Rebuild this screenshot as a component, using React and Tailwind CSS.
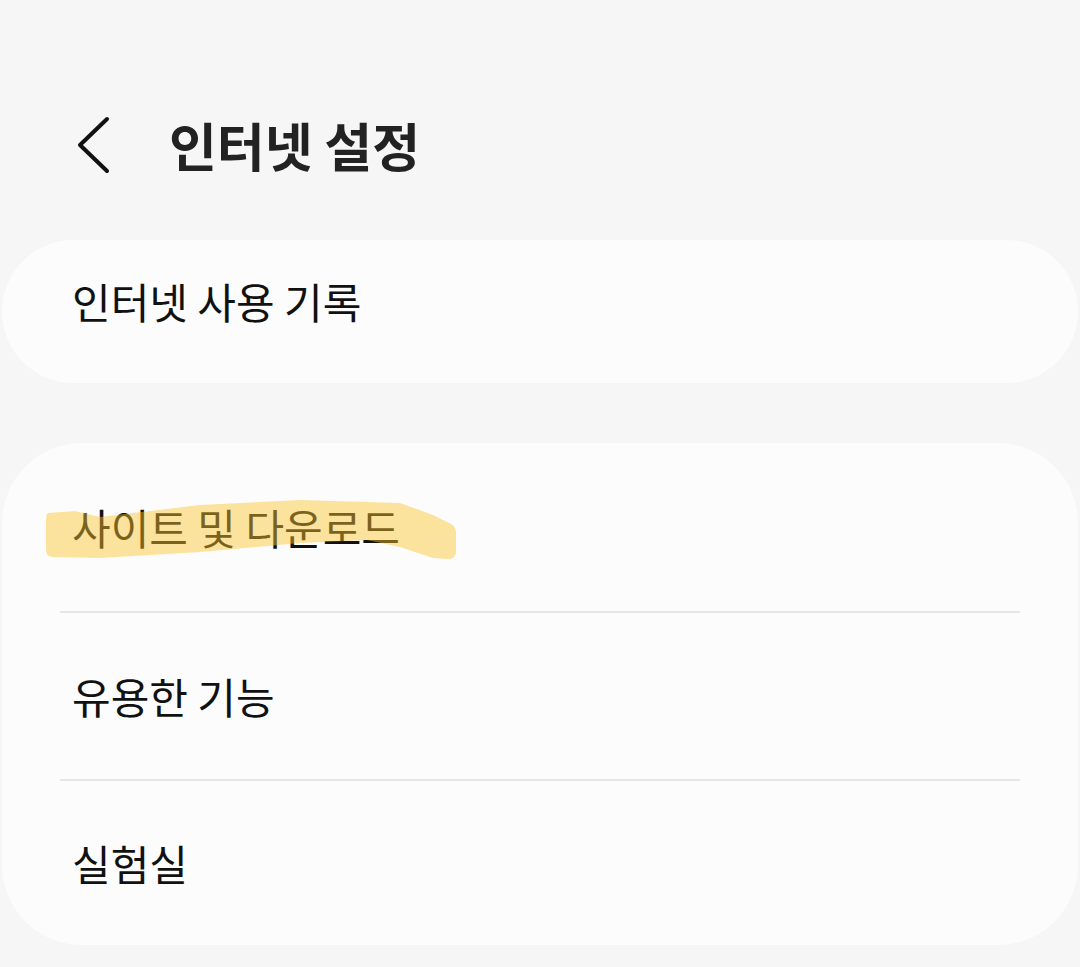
const rows = ["사이트 및 다운로드", "유용한 기능", "실험실"];

const Highlight = () => (
  <svg
    className="pointer-events-none absolute left-[38px] top-[52px]"
    width="425"
    height="70"
    viewBox="0 0 425 70"
  >
    <path
      d="M8 18 L35 16 L60 22 L160 10 L260 5 L360 8 L393 20 L411 29 Q417 33 416 40 L416 58 Q415 64 408 64 L393 63 L360 52 L327 45 L260 48 L160 57 L60 63 L12 62 Q6 61 6 55 L6 25 Q6 19 8 18 Z"
      fill="#fcc52a"
      fillOpacity="0.45"
    />
  </svg>
);

const App = () => {
  return (
    <div className="min-h-screen bg-[#f6f6f6] font-['Noto_Sans_CJK_KR','Noto_Sans',sans-serif] text-[#111]">
      <header className="flex h-[240px] items-center pt-[50px] pl-[76px]">
        <svg width="36" height="58" viewBox="0 0 36 58" className="shrink-0">
          <path
            d="M31 3 L4 29 L31 55"
            fill="none"
            stroke="#111"
            strokeWidth="4"
            strokeLinecap="round"
            strokeLinejoin="round"
          />
        </svg>
        <h1 className="ml-[57px] text-[52px] font-bold leading-none text-[#222]">
          인터넷 설정
        </h1>
      </header>

      <div className="mx-[2px] flex h-[143px] items-center rounded-[72px] bg-[#fcfcfc] pb-[22px] pl-[70px]">
        <span className="text-[42px] leading-none">인터넷 사용 기록</span>
      </div>

      <div className="mx-[2px] mt-[60px] rounded-[80px] bg-[#fcfcfc]">
        {rows.map((label, i) => (
          <div key={label}>
            {i > 0 && <div className="mx-[58px] h-[2px] bg-[#e6e6e6]" />}
            <div
              className={`relative flex items-center pl-[70px] ${
                i === 0 ? "h-[168px]" : i === 1 ? "h-[166px]" : "h-[164px]"
              }`}
            >
              <span className="text-[42px] leading-none">{label}</span>
              {i === 0 && <Highlight />}
            </div>
          </div>
        ))}
      </div>
    </div>
  );
};

export default App;
